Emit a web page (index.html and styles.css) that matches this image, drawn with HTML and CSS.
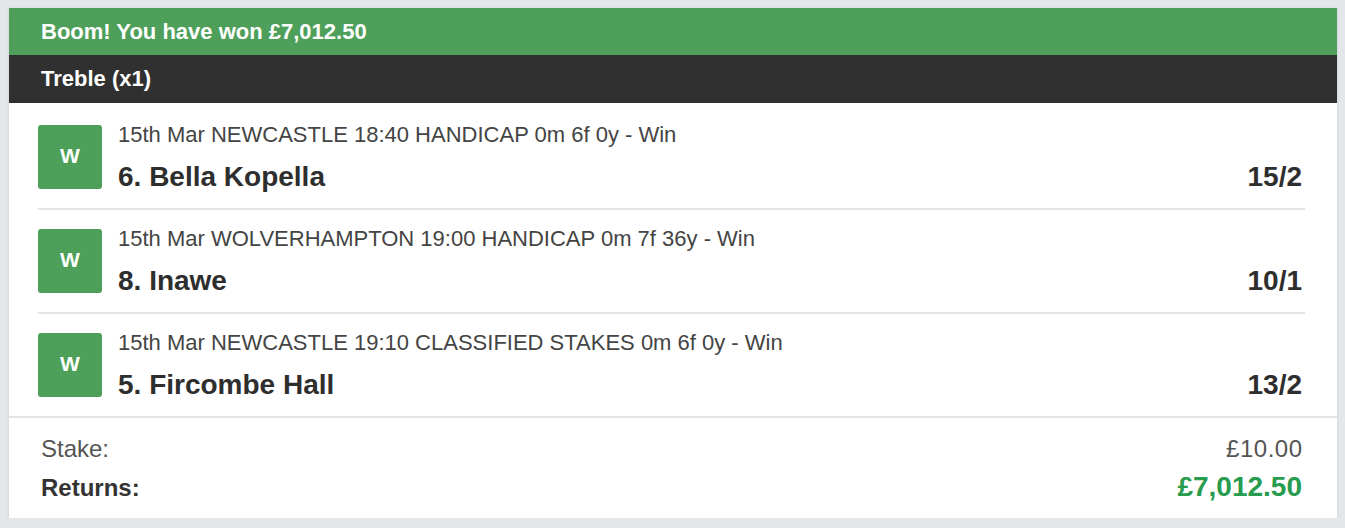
FILE: index.html
```html
<!DOCTYPE html>
<html lang="en">
<head>
    <meta charset="UTF-8">
    <meta name="viewport" content="width=device-width, initial-scale=1.0">
    <title>Bet Receipt</title>
    <link rel="stylesheet" href="styles.css">
</head>
<body>

    <div class="bet-card">
        <div class="win-banner">Boom! You have won £7,012.50</div>
        <div class="bet-type">Treble (x1)</div>

        <div class="selections">
            <div class="selection">
                <div class="result-badge">W</div>
                <div class="selection-info">
                    <div class="event">15th Mar NEWCASTLE 18:40 HANDICAP 0m 6f 0y - Win</div>
                    <div class="runner">
                        <span>6. Bella Kopella</span>
                        <span class="odds">15/2</span>
                    </div>
                </div>
            </div>
            <div class="selection">
                <div class="result-badge">W</div>
                <div class="selection-info">
                    <div class="event">15th Mar WOLVERHAMPTON 19:00 HANDICAP 0m 7f 36y - Win</div>
                    <div class="runner">
                        <span>8. Inawe</span>
                        <span class="odds">10/1</span>
                    </div>
                </div>
            </div>
            <div class="selection">
                <div class="result-badge">W</div>
                <div class="selection-info">
                    <div class="event">15th Mar NEWCASTLE 19:10 CLASSIFIED STAKES 0m 6f 0y - Win</div>
                    <div class="runner">
                        <span>5. Fircombe Hall</span>
                        <span class="odds">13/2</span>
                    </div>
                </div>
            </div>
        </div>

        <div class="totals">
            <div class="total-row">
                <span>Stake:</span>
                <span class="stake-amount">£10.00</span>
            </div>
            <div class="total-row returns">
                <span>Returns:</span>
                <span class="returns-amount">£7,012.50</span>
            </div>
        </div>
    </div>

</body>
</html>
```

FILE: styles.css
```css
body {
    font-family: "Liberation Sans", Arial, sans-serif;
    background-color: #e3e7ea;
    margin: 0;
    padding: 8px 8px 0 9px;
    color: #333;
}

.bet-card {
    background-color: #fff;
    box-shadow: 0 1px 3px rgba(0, 0, 0, 0.12);
}

.win-banner {
    background-color: #4d9f5a;
    color: #fff;
    font-weight: bold;
    font-size: 22px;
    height: 47px;
    line-height: 47px;
    padding: 0 32px;
}

.bet-type {
    background-color: #303030;
    color: #fff;
    font-weight: bold;
    font-size: 22px;
    height: 48px;
    line-height: 48px;
    padding: 0 32px;
}

.selections {
    padding: 3px 32px 0 29px;
}

.selection {
    display: flex;
    align-items: flex-start;
    padding: 19px 0;
    border-bottom: 2px solid #e1e5e8;
}

.selection:last-child {
    border-bottom: none;
}

.result-badge {
    width: 64px;
    height: 64px;
    flex-shrink: 0;
    background-color: #4d9f5a;
    border-radius: 3px;
    color: #fff;
    font-weight: bold;
    font-size: 21px;
    display: flex;
    justify-content: center;
    align-items: center;
    padding-bottom: 2px;
    box-sizing: border-box;
    margin-right: 16px;
}

.selection-info {
    flex: 1;
}

.event {
    font-size: 22px;
    color: #444;
    line-height: 20px;
}

.runner {
    display: flex;
    justify-content: space-between;
    font-size: 28px;
    font-weight: bold;
    color: #2e2e2e;
    line-height: 24px;
    margin-top: 20px;
    padding-right: 3px;
}

.totals {
    border-top: 2px solid #e1e5e8;
    padding: 15px 35px 14px 32px;
}

.total-row {
    display: flex;
    justify-content: space-between;
    align-items: baseline;
    font-size: 24px;
    color: #555;
    line-height: 32px;
}

.stake-amount {
    letter-spacing: 0.5px;
    margin-right: -0.5px;
}

.total-row.returns {
    font-weight: bold;
    color: #333;
    margin-top: 6px;
}

.returns-amount {
    font-size: 28px;
    color: #279b4e;
}
```
